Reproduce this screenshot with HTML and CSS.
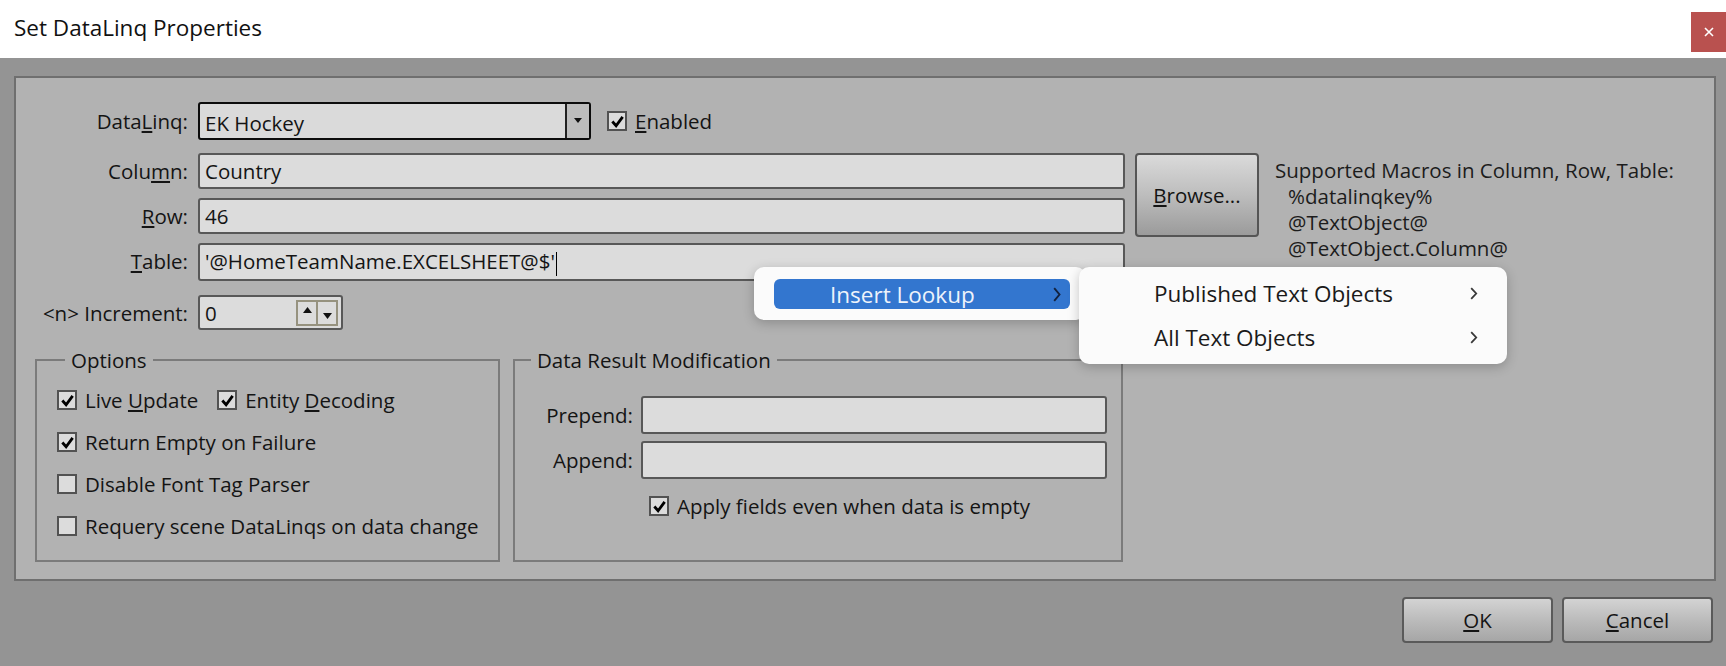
FILE: index.html
```html
<!DOCTYPE html>
<html>
<head>
<meta charset="utf-8">
<title>Set DataLinq Properties</title>
<link rel="stylesheet" href="styles.css">
</head>
<body>
<div class="window">
  <header class="titlebar">
    <div class="title">Set DataLinq Properties</div>
    <div class="close"><svg width="12" height="12" viewBox="0 0 12 12"><path d="M2 2 L10 10 M10 2 L2 10" stroke="#fff" stroke-width="1.6" fill="none"/></svg></div>
  </header>
  <main class="client">
    <section class="panel">
      <div class="row row-dl">
        <span class="lbl">Data<u>L</u>inq:</span>
        <div class="combo">
          <span class="combo-text">EK Hockey</span>
          <span class="combo-btn"><svg width="10" height="6" viewBox="0 0 10 6"><path d="M1 0 L9 0 L5 5 Z" fill="#111"/></svg></span>
        </div>
        <div class="check check-enabled"><span class="box on"><svg viewBox="0 0 16 16"><path d="M2.5 8 L6.5 12.5 L13.5 3" stroke="#000" stroke-width="3" fill="none"/></svg></span><span><u>E</u>nabled</span></div>
      </div>
      <div class="fields">
        <span class="lbl">Colu<u>m</u>n:</span>
        <div class="field">Country</div>
        <div class="browse"><span><u>B</u>rowse...</span></div>
        <div class="macros">
          <div>Supported Macros in Column, Row, Table:</div>
          <div class="ind">%datalinqkey%</div>
          <div class="ind">@TextObject@</div>
          <div class="ind">@TextObject.Column@</div>
        </div>
        <span class="lbl"><u>R</u>ow:</span>
        <div class="field">46</div>
        <span class="lbl"><u>T</u>able:</span>
        <div class="field">'@HomeTeamName.EXCELSHEET@$'<span class="caret"></span></div>
      </div>
      <div class="row row-inc">
        <span class="lbl">&lt;n&gt; Increment:</span>
        <div class="spin">
          <span class="spin-text">0</span>
          <span class="spin-btns">
            <span class="sb up"><svg width="9" height="6" viewBox="0 0 9 6"><path d="M0 6 L9 6 L4.5 0 Z" fill="#111"/></svg></span>
            <span class="sb down"><svg width="9" height="6" viewBox="0 0 9 6"><path d="M0 0 L9 0 L4.5 6 Z" fill="#111"/></svg></span>
          </span>
        </div>
      </div>
      <div class="groups">
        <fieldset class="group options">
          <legend>Options</legend>
          <div class="opt-row">
            <div class="check"><span class="box on"><svg viewBox="0 0 16 16"><path d="M2.5 8 L6.5 12.5 L13.5 3" stroke="#000" stroke-width="3" fill="none"/></svg></span><span>Live <u>U</u>pdate</span></div>
            <div class="check second"><span class="box on"><svg viewBox="0 0 16 16"><path d="M2.5 8 L6.5 12.5 L13.5 3" stroke="#000" stroke-width="3" fill="none"/></svg></span><span>Entity <u>D</u>ecoding</span></div>
          </div>
          <div class="opt-row">
            <div class="check"><span class="box on"><svg viewBox="0 0 16 16"><path d="M2.5 8 L6.5 12.5 L13.5 3" stroke="#000" stroke-width="3" fill="none"/></svg></span><span>Return Empty on Failure</span></div>
          </div>
          <div class="opt-row">
            <div class="check"><span class="box"></span><span>Disable Font Tag Parser</span></div>
          </div>
          <div class="opt-row">
            <div class="check"><span class="box"></span><span>Requery scene DataLinqs on data change</span></div>
          </div>
        </fieldset>
        <fieldset class="group drm">
          <legend>Data Result Modification</legend>
          <div class="drm-grid">
            <span class="lbl">Prepend:</span>
            <div class="field tall"></div>
            <span class="lbl">Append:</span>
            <div class="field tall"></div>
            <span></span>
            <div class="check apply"><span class="box on"><svg viewBox="0 0 16 16"><path d="M2.5 8 L6.5 12.5 L13.5 3" stroke="#000" stroke-width="3" fill="none"/></svg></span><span>Apply fields even when data is empty</span></div>
          </div>
        </fieldset>
      </div>
    </section>
    <footer class="buttons">
      <div class="btn"><span><u>O</u>K</span></div>
      <div class="btn"><span><u>C</u>ancel</span></div>
    </footer>
  </main>

  <div class="menu menu-main">
    <div class="mi hl"><span>Insert Lookup</span><svg class="chev" width="8" height="15" viewBox="0 0 8 15"><path d="M1.2 1.2 L6.5 7.5 L1.2 13.8" stroke="#13223f" stroke-width="1.9" fill="none"/></svg></div>
  </div>
  <div class="menu menu-sub">
    <div class="mi"><span>Published Text Objects</span><svg class="chev" width="8" height="13" viewBox="0 0 8 13"><path d="M1.2 1.2 L6.2 6.5 L1.2 11.8" stroke="#383838" stroke-width="1.8" fill="none"/></svg></div>
    <div class="mi"><span>All Text Objects</span><svg class="chev" width="8" height="13" viewBox="0 0 8 13"><path d="M1.2 1.2 L6.2 6.5 L1.2 11.8" stroke="#383838" stroke-width="1.8" fill="none"/></svg></div>
  </div>
</div>
</body>
</html>
```

FILE: styles.css
```css
* { box-sizing: border-box; }
html, body { margin: 0; padding: 0; }
body {
  width: 1726px;
  height: 666px;
  overflow: hidden;
  background: #949494;
  font-family: "Open Sans", "Noto Sans", sans-serif;
  font-size: 20.5px;
  color: #141414;
}
.window { position: relative; width: 1726px; height: 666px; }

.titlebar {
  height: 58px;
  background: #ffffff;
  display: flex;
  align-items: center;
  justify-content: space-between;
}
.title {
  padding-left: 14px;
  font-size: 22.5px;
  color: #111;
  margin-top: -3px;
}
.close {
  align-self: flex-start;
  margin-top: 12px;
  width: 35px;
  height: 40px;
  background: #b9514f;
  display: flex;
  align-items: center;
  justify-content: center;
}

.client { padding: 18px 10px 0 14px; }
.panel {
  background: #b2b2b2;
  border: 2px solid #6f6f6f;
  padding: 24px 0 17px 0;
}
.lbl {
  text-align: right;
  white-space: nowrap;
  line-height: 36px;
}
.row { display: flex; align-items: center; }
.row .lbl { width: 172px; margin-right: 10px; }
.row-dl { height: 38px; }

.combo {
  width: 393px;
  height: 38px;
  background: #dadada;
  border: 2px solid #0c0c0c;
  border-radius: 3px;
  display: flex;
  align-items: stretch;
}
.combo-text { flex: 1; padding-left: 5px; line-height: 36px; padding-top: 1px; }
.combo-btn {
  width: 24px;
  border-left: 2px solid #202020;
  background: #bdbdbd;
  display: flex;
  align-items: center;
  justify-content: center;
}

.check { display: flex; align-items: center; white-space: nowrap; }
.box {
  width: 20px;
  height: 20px;
  border: 2px solid #525252;
  background: #dcdcdc;
  margin-right: 8px;
  flex: none;
  display: flex;
  align-items: center;
  justify-content: center;
}
.box svg { width: 15px; height: 15px; }
.check-enabled { margin-left: 16px; }

.fields {
  margin-top: 13px;
  display: grid;
  grid-template-columns: 172px 927px 124px 1fr;
  grid-template-rows: 36px 36px 38px;
  column-gap: 10px;
  row-gap: 9px;
}
.field {
  background: #dcdcdc;
  border: 2px solid #585858;
  border-radius: 3px;
  padding-left: 5px;
  line-height: 32px;
  white-space: nowrap;
}
.caret {
  display: inline-block;
  width: 0;
  height: 24px;
  border-left: 1.5px solid #000;
  vertical-align: middle;
  margin-left: 1px;
}
.browse {
  grid-column: 3;
  grid-row: 1 / span 2;
  height: 84px;
  border: 2px solid #555;
  border-radius: 4px;
  background: linear-gradient(#dadada, #bdbdbd 50%, #9b9b9b);
  display: flex;
  align-items: center;
  justify-content: center;
}
.macros {
  grid-column: 4;
  grid-row: 1 / span 3;
  padding-left: 6px;
  margin-top: 4px;
  line-height: 26px;
  white-space: nowrap;
  color: #1c1c1c;
}
.macros .ind { padding-left: 13px; }

.row-inc { margin-top: 14px; height: 35px; }
.spin {
  width: 145px;
  height: 35px;
  background: #dcdcdc;
  border: 2px solid #585858;
  border-radius: 3px;
  display: flex;
  align-items: center;
}
.spin-text { flex: 1; padding-left: 5px; }
.spin-btns { display: flex; margin-right: 3px; }
.sb {
  width: 21px;
  height: 26px;
  display: flex;
  justify-content: center;
  border: 2px solid #96927f;
  background: #dcdcdc;
}
.sb.down { border-left-width: 1px; }
.sb.up { align-items: flex-start; padding-top: 5px; border-right-width: 1px; }
.sb.down { align-items: flex-end; padding-bottom: 5px; }

.groups {
  display: flex;
  margin-top: 18px;
  margin-left: 19px;
  gap: 13px;
}
.group {
  margin: 0;
  border: 2px solid #7b7b7b;
  height: 214px;
}
.group legend {
  line-height: 24px;
  padding: 0 6px;
  margin-left: 8px;
}
.options { width: 465px; padding: 7px 0 0 20px; }
.opt-row { height: 42px; display: flex; align-items: center; }
.check.second { margin-left: 19px; }

.drm { width: 610px; padding: 24px 14px 0 8px; }
.drm-grid {
  display: grid;
  grid-template-columns: 110px 466px;
  grid-template-rows: 38px 38px 42px;
  column-gap: 8px;
  row-gap: 7px;
}
.drm-grid .lbl { line-height: 38px; }
.field.tall { height: 38px; }
.apply { margin-left: 8px; margin-top: -2px; }

.buttons {
  display: flex;
  justify-content: flex-end;
  gap: 9px;
  padding-top: 16px;
  padding-right: 3px;
}
.btn {
  width: 151px;
  height: 46px;
  border: 2px solid #5a5a5a;
  border-radius: 4px;
  background: linear-gradient(#d3d3d3, #b9b9b9 55%, #a6a6a6);
  display: flex;
  align-items: center;
  justify-content: center;
}

.menu {
  position: absolute;
  background: #fbfbfb;
  border-radius: 10px;
  box-shadow: 0 3px 12px rgba(0, 0, 0, 0.22);
  font-size: 22.5px;
  color: #1a1a1a;
}
.menu-main {
  left: 754px;
  top: 267px;
  width: 332px;
  height: 53px;
  padding: 12px 0 0 20px;
}
.menu-main .mi {
  width: 296px;
  height: 30px;
  background: #3376cf;
  border-radius: 6px;
  color: #eef3fb;
  display: flex;
  align-items: center;
  justify-content: space-between;
  padding: 0 9px 0 56px;
}
.menu-sub {
  left: 1079px;
  top: 267px;
  width: 428px;
  height: 97px;
  padding: 4px 0 0 0;
}
.menu-sub .mi {
  height: 44px;
  display: flex;
  align-items: center;
  justify-content: space-between;
  padding: 0 29px 0 75px;
}
.chev { display: block; }
```
